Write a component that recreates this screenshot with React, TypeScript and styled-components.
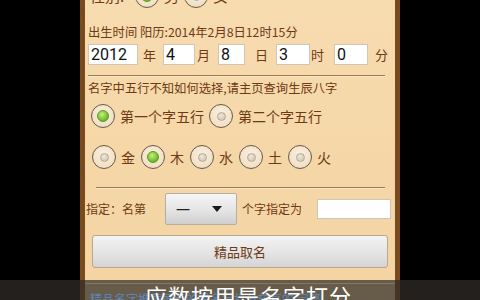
import styled, { createGlobalStyle } from "styled-components";

const GlobalStyle = createGlobalStyle`
  html, body {
    margin: 0;
    padding: 0;
    background: #000;
    overflow: hidden;
  }
  body {
    font-family: "Noto Sans CJK SC", "Noto Sans", sans-serif;
  }
`;

const Screen = styled.div`
  position: relative;
  width: 480px;
  height: 300px;
  background: #000;
  display: flex;
  justify-content: center;
  overflow: hidden;
`;

const Panel = styled.div`
  width: 320px;
  height: 300px;
  box-sizing: border-box;
  border-left: 5px solid #7a4a1f;
  border-right: 5px solid #7a4a1f;
  background: linear-gradient(180deg, #f7dcb0 0%, #f5d6a6 60%, #f4d4a3 100%);
  padding: 0 5px 0 3px;
  display: flex;
  flex-direction: column;
  color: #6e3a14;
`;

const Row = styled.div<{ $top: number; $h?: number }>`
  display: flex;
  align-items: center;
  margin-top: ${(p) => p.$top}px;
  height: ${(p) => (p.$h ? `${p.$h}px` : "auto")};
  flex-shrink: 0;
`;

const Label = styled.span<{ $size?: number }>`
  font-size: ${(p) => p.$size ?? 12}px;
  line-height: 16px;
  white-space: nowrap;
  color: #6e3a14;
  flex-shrink: 0;
`;

const Text = styled.div<{ $top: number }>`
  margin-top: ${(p) => p.$top}px;
  font-size: 12.3px;
  line-height: 16px;
  white-space: nowrap;
  color: #6e3a14;
  flex-shrink: 0;
`;

const Ring = styled.span<{ $gap?: number }>`
  width: 22px;
  height: 22px;
  border-radius: 50%;
  border: 1.5px solid #6a5846;
  background: radial-gradient(circle at 50% 40%, #fbf1e0 0%, #ecd9bb 100%);
  display: flex;
  align-items: center;
  justify-content: center;
  margin-left: ${(p) => p.$gap ?? 0}px;
  margin-right: 5px;
  flex-shrink: 0;
`;

const Dot = styled.span<{ $checked?: boolean }>`
  width: ${(p) => (p.$checked ? 10 : 7)}px;
  height: ${(p) => (p.$checked ? 10 : 7)}px;
  border-radius: 50%;
  background: ${(p) =>
    p.$checked
      ? "radial-gradient(circle at 40% 35%, #c4f07a 0%, #6cb82a 70%, #4e9418 100%)"
      : "radial-gradient(circle at 40% 35%, #efe6da 0%, #cdbfae 100%)"};
  border: 1px solid ${(p) => (p.$checked ? "#5a9a20" : "#b8a894")};
`;

const Field = styled.input<{ $w: number }>`
  width: ${(p) => p.$w}px;
  height: 21px;
  box-sizing: border-box;
  border: 1px solid #cfc6b6;
  background: #fff;
  padding: 0 2px;
  font-family: Roboto, "Noto Sans", sans-serif;
  font-size: 16px;
  color: #111;
  outline: none;
  flex-shrink: 0;
`;

const Unit = styled.span<{ $w: number; $pad: number }>`
  width: ${(p) => p.$w}px;
  padding-left: ${(p) => p.$pad}px;
  box-sizing: border-box;
  font-size: 13px;
  color: #6e3a14;
  flex-shrink: 0;
`;

const Divider = styled.div<{ $top: number; $left?: number }>`
  margin-top: ${(p) => p.$top}px;
  margin-left: ${(p) => p.$left ?? 0}px;
  margin-right: 5px;
  height: 1px;
  background: #a27a52;
  border-bottom: 1px solid #fbe8c8;
  flex-shrink: 0;
`;

const Spinner = styled.div`
  width: 72px;
  height: 32px;
  box-sizing: border-box;
  margin-left: 19px;
  flex-shrink: 0;
  border: 1px solid #b8ae9e;
  border-radius: 2px;
  background: linear-gradient(180deg, #f6f6f6 0%, #e2e2e2 60%, #cfcfcf 100%);
  display: flex;
  align-items: center;
  justify-content: space-between;
  padding: 0 14px 0 10px;
  color: #222;
  font-size: 14px;
`;

const Caret = styled.span`
  width: 0;
  height: 0;
  border-left: 5px solid transparent;
  border-right: 5px solid transparent;
  border-top: 6px solid #1a1a1a;
`;

const BigButton = styled.button`
  margin: 10px 2px 0 4px;
  height: 33px;
  flex-shrink: 0;
  border: 1px solid #b9a88e;
  border-radius: 3px;
  background: linear-gradient(180deg, #f3f3f3 0%, #e4e4e4 55%, #d4d4d4 100%);
  font-family: "Noto Sans CJK SC", sans-serif;
  font-size: 13px;
  color: #6e3a14;
`;

const Overlay = styled.div`
  position: absolute;
  left: 0;
  right: 0;
  bottom: 0;
  height: 20px;
  background: rgba(48, 44, 40, 0.72);
  overflow: hidden;
`;

const OverlayInner = styled.div`
  position: relative;
  width: 310px;
  margin-left: 85px;
  height: 20px;
  border-top: 1px solid rgba(200, 170, 130, 0.35);
  margin-top: 3px;
`;

const Caption = styled.div`
  position: absolute;
  left: 5px;
  top: 6px;
  font-size: 12px;
  color: #5d86b8;
  white-space: nowrap;
`;

const Subtitle = styled.div`
  position: absolute;
  left: 60px;
  top: -1px;
  font-size: 22px;
  line-height: 24px;
  color: #fff;
  white-space: nowrap;
  letter-spacing: 1px;
`;

const radios1 = ["第一个字五行", "第二个字五行"];
const elements = ["金", "木", "水", "土", "火"];

export default function App() {
  return (
    <>
      <GlobalStyle />
      <Screen>
        <Panel>
          <Row $top={-16} $h={24}>
            <Label $size={15} style={{ width: 45, paddingLeft: 2 }}>性别:</Label>
            <Ring><Dot $checked /></Ring>
            <Label $size={15} style={{ width: 20 }}>男</Label>
            <Ring><Dot /></Ring>
            <Label $size={15}>女</Label>
          </Row>
          <Text $top={16}>出生时间 阳历:2014年2月8日12时15分</Text>
          <Row $top={4} $h={21}>
            <Field $w={50} defaultValue="2012" />
            <Unit $w={25} $pad={5}>年</Unit>
            <Field $w={32} defaultValue="4" />
            <Unit $w={23} $pad={2}>月</Unit>
            <Field $w={27} defaultValue="8" />
            <Unit $w={31} $pad={10}>日</Unit>
            <Field $w={34} defaultValue="3" />
            <Unit $w={24} $pad={1}>时</Unit>
            <Field $w={34} defaultValue="0" />
            <Unit $w={20} $pad={7}>分</Unit>
          </Row>
          <Divider $top={10} />
          <Text $top={3}>名字中五行不知如何选择,请主页查询生辰八字</Text>
          <Row $top={8} $h={24}>
            {radios1.map((r, i) => (
              <span key={r} style={{ display: "contents" }}>
                <Ring $gap={i === 0 ? 3 : 5}><Dot $checked={i === 0} /></Ring>
                <Label $size={14}>{r}</Label>
              </span>
            ))}
          </Row>
          <Row $top={17} $h={24}>
            {elements.map((e, i) => (
              <span key={e} style={{ display: "contents" }}>
                <Ring $gap={i === 0 ? 4 : 6}><Dot $checked={i === 1} /></Ring>
                <Label $size={14}>{e}</Label>
              </span>
            ))}
          </Row>
          <Divider $top={18} $left={8} />
          <Row $top={4} $h={32}>
            <Label style={{ marginLeft: -2 }}>指定：名第</Label>
            <Spinner>
              <span>一</span>
              <Caret />
            </Spinner>
            <Label style={{ marginLeft: 5 }}>个字指定为</Label>
            <Field $w={74} style={{ marginLeft: 15, height: 20 }} />
          </Row>
          <BigButton>精品取名</BigButton>
        </Panel>
        <Overlay>
          <OverlayInner>
            <Caption>精品名字推荐展示的是名字打分较高的 完整</Caption>
            <Subtitle>应数按用是名字打分</Subtitle>
          </OverlayInner>
        </Overlay>
      </Screen>
    </>
  );
}
